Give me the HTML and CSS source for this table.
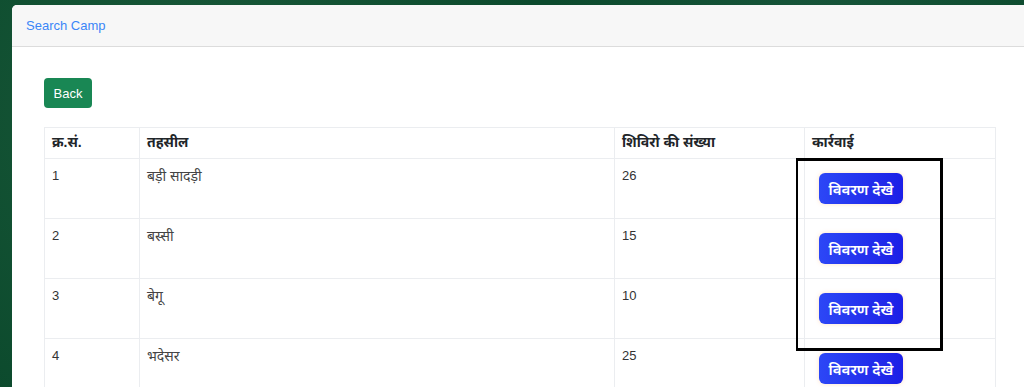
FILE: index.html
```html
<!DOCTYPE html>
<html lang="hi">
<head>
<meta charset="utf-8">
<title>Search Camp</title>
<link rel="stylesheet" href="styles.css">
</head>
<body>
<div class="page">
  <div class="card">
    <div class="card-header"><a class="title" href="#">Search Camp</a></div>
    <div class="card-body">
      <button class="btn-back">Back</button>
      <table class="grid">
        <colgroup>
          <col class="c1"><col class="c2"><col class="c3"><col class="c4">
        </colgroup>
        <thead>
          <tr><th><span class="hi">क्र.सं.</span></th><th><span class="hi">तहसील</span></th><th><span class="hi">शिविरो की संख्या</span></th><th><span class="hi">कार्रवाई</span></th></tr>
        </thead>
        <tbody>
          <tr><td>1</td><td><span class="hi">बड़ी सादड़ी</span></td><td>26</td><td><button class="btn-view">विवरण देखे</button></td></tr>
          <tr><td>2</td><td><span class="hi">बस्सी</span></td><td>15</td><td><button class="btn-view">विवरण देखे</button></td></tr>
          <tr><td>3</td><td><span class="hi">बेगू</span></td><td>10</td><td><button class="btn-view">विवरण देखे</button></td></tr>
          <tr><td>4</td><td><span class="hi">भदेसर</span></td><td>25</td><td><button class="btn-view">विवरण देखे</button></td></tr>
        </tbody>
      </table>
    </div>
  </div>
  <div class="highlight"></div>
</div>
</body>
</html>
```

FILE: styles.css
```css
html, body {
  margin: 0;
  padding: 0;
  height: 387px;
  overflow: hidden;
}
body {
  background: radial-gradient(circle at 20% 30%, #1a5a3a 0, transparent 40%),
              radial-gradient(circle at 80% 10%, #17553a 0, transparent 30%),
              #0c4a2d;
  font-family: "Liberation Sans", "Noto Sans", "Noto Sans Devanagari", sans-serif;
}
.page {
  position: relative;
  padding: 5px 0 0 12px;
}
.card {
  width: 1040px;
  background: #fff;
  border-top-left-radius: 5px;
  overflow: hidden;
}
.card-header {
  height: 41px;
  background: #f7f7f7;
  border-bottom: 1px solid #dcdcdc;
  display: flex;
  align-items: center;
  padding: 0 14px;
}
.title {
  color: #3b86f7;
  font-size: 13px;
  text-decoration: none;
}
.card-body {
  padding: 31px 32px 40px;
}
.btn-back {
  display: block;
  width: 48px;
  height: 30px;
  background: #198754;
  color: #fff;
  border: none;
  border-radius: 4px;
  font-family: "Liberation Sans", sans-serif;
  font-size: 13px;
  padding: 0;
  margin-bottom: 19px;
}
.grid {
  width: 951px;
  border-collapse: collapse;
  table-layout: fixed;
  font-size: 13px;
}
.c1 { width: 95px; }
.c2 { width: 475px; }
.c3 { width: 190px; }
.c4 { width: 191px; }
.grid th, .grid td {
  border: 1px solid #ebedf0;
  text-align: left;
  vertical-align: top;
  padding: 8px 7px;
}
.grid th {
  height: 13px;
  line-height: 13px;
  color: #212529;
  font-weight: bold;
  padding-bottom: 9px;
}
.grid td {
  height: 43px;
  line-height: 20px;
  color: #333;
  padding-top: 7px;
  padding-bottom: 9px;
}
.hi {
  font-size: 14px;
}
.grid td .hi {
  color: #444;
}
.btn-view {
  display: block;
  margin: 7px 0 0 7px;
  width: 84px;
  height: 31px;
  border: none;
  border-radius: 6px;
  background: linear-gradient(90deg, #2c47f6, #1c1fe6);
  color: #fff;
  font-family: "Noto Sans", "Liberation Sans", sans-serif;
  font-size: 15px;
  font-weight: 600;
  padding: 0;
  box-shadow: 0 0 4px rgba(255, 170, 90, 0.35);
}
.highlight {
  position: absolute;
  left: 796px;
  top: 158px;
  width: 142px;
  height: 187px;
  border: 3px solid #000;
  border-left-width: 2px;
}
```
